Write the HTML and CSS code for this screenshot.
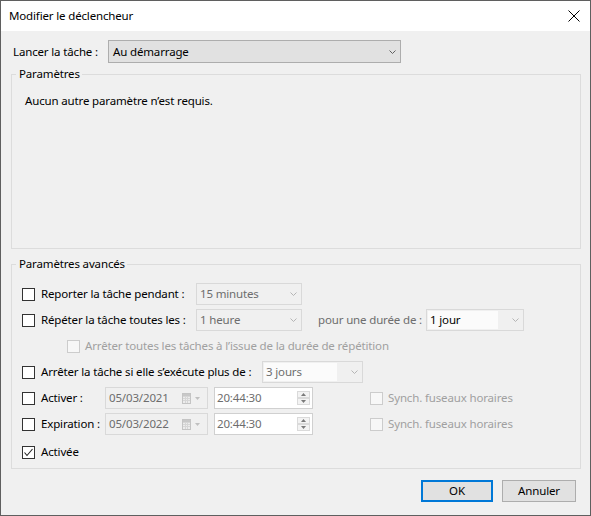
FILE: index.html
```html
<!DOCTYPE html>
<html lang="fr">
<head>
<meta charset="utf-8">
<title>Modifier le déclencheur</title>
<link rel="stylesheet" href="styles.css">
</head>
<body>
<div class="window">
  <div class="titlebar">
    <span class="title">Modifier le déclencheur</span>
    <svg class="close" width="12" height="12" viewBox="0 0 12 12"><path d="M0.5 0.5 L11.5 11.5 M11.5 0.5 L0.5 11.5" stroke="#000" stroke-width="1" fill="none"/></svg>
  </div>
  <div class="body">
    <div class="toprow">
      <span class="toplabel">Lancer la tâche :</span>
      <div class="select">
        <span>Au démarrage</span>
        <svg class="chev" width="7" height="4" viewBox="0 0 7 4"><path d="M0.5 0.5 L3.5 3.5 L6.5 0.5" stroke="#606060" fill="none"/></svg>
      </div>
    </div>

    <div class="group g1">
      <div class="legend">Paramètres</div>
      <p class="note">Aucun autre paramètre n’est requis.</p>
    </div>

    <div class="group g2">
      <div class="legend">Paramètres avancés</div>
      <div class="rows">
        <div class="row">
          <span class="chk"></span>
          <span class="lbl lbl-a">Reporter la tâche pendant :</span>
          <div class="combo w106"><span class="val dim">15 minutes</span><svg class="chev" width="7" height="4" viewBox="0 0 7 4"><path d="M0.5 0.5 L3.5 3.5 L6.5 0.5" stroke="#b5b5b5" fill="none"/></svg></div>
        </div>
        <div class="row">
          <span class="chk"></span>
          <span class="lbl lbl-a">Répéter la tâche toutes les :</span>
          <div class="combo w106"><span class="val dim">1 heure</span><svg class="chev" width="7" height="4" viewBox="0 0 7 4"><path d="M0.5 0.5 L3.5 3.5 L6.5 0.5" stroke="#b5b5b5" fill="none"/></svg></div>
          <span class="lbl lbl-pour dim">pour une durée de :</span>
          <div class="combo w98"><span class="val white">1 jour</span><svg class="chev" width="7" height="4" viewBox="0 0 7 4"><path d="M0.5 0.5 L3.5 3.5 L6.5 0.5" stroke="#b5b5b5" fill="none"/></svg></div>
        </div>
        <div class="row">
          <span class="chk dis indent"></span>
          <span class="lbl faint">Arrêter toutes les tâches à l’issue de la durée de répétition</span>
        </div>
        <div class="row">
          <span class="chk"></span>
          <span class="lbl lbl-b">Arrêter la tâche si elle s’exécute plus de :</span>
          <div class="combo w101"><span class="val white dim">3 jours</span><svg class="chev" width="7" height="4" viewBox="0 0 7 4"><path d="M0.5 0.5 L3.5 3.5 L6.5 0.5" stroke="#b5b5b5" fill="none"/></svg></div>
        </div>
        <div class="row">
          <span class="chk"></span>
          <span class="lbl lbl-c">Activer :</span>
          <div class="date"><span class="dim">05/03/2021</span>
            <span class="cal">
              <svg width="19" height="11" viewBox="0 0 19 11"><rect x="0.5" y="0.5" width="8" height="10" fill="#ececec" stroke="#c4c4c4"/><path d="M1 3.5 H8 M1 5.5 H8 M1 7.5 H8 M3.5 3 V10 M5.5 3 V10" stroke="#d6d6d6"/><rect x="1" y="1" width="7" height="2" fill="#c8c8c8"/><path d="M13 4 L18 4 L15.5 7 Z" fill="#c0c0c0"/></svg>
            </span>
          </div>
          <div class="time"><span class="dim">20:44:30</span>
            <span class="spin"><span class="sb"><svg width="5" height="3" viewBox="0 0 5 3"><path d="M0 3 L2.5 0 L5 3 Z" fill="#7a7a7a"/></svg></span><span class="sb"><svg width="5" height="3" viewBox="0 0 5 3"><path d="M0 0 L2.5 3 L5 0 Z" fill="#7a7a7a"/></svg></span></span>
          </div>
          <span class="chk dis sync"></span>
          <span class="lbl faint">Synch. fuseaux horaires</span>
        </div>
        <div class="row">
          <span class="chk"></span>
          <span class="lbl lbl-c">Expiration :</span>
          <div class="date"><span class="dim">05/03/2022</span>
            <span class="cal">
              <svg width="19" height="11" viewBox="0 0 19 11"><rect x="0.5" y="0.5" width="8" height="10" fill="#ececec" stroke="#c4c4c4"/><path d="M1 3.5 H8 M1 5.5 H8 M1 7.5 H8 M3.5 3 V10 M5.5 3 V10" stroke="#d6d6d6"/><rect x="1" y="1" width="7" height="2" fill="#c8c8c8"/><path d="M13 4 L18 4 L15.5 7 Z" fill="#c0c0c0"/></svg>
            </span>
          </div>
          <div class="time"><span class="dim">20:44:30</span>
            <span class="spin"><span class="sb"><svg width="5" height="3" viewBox="0 0 5 3"><path d="M0 3 L2.5 0 L5 3 Z" fill="#7a7a7a"/></svg></span><span class="sb"><svg width="5" height="3" viewBox="0 0 5 3"><path d="M0 0 L2.5 3 L5 0 Z" fill="#7a7a7a"/></svg></span></span>
          </div>
          <span class="chk dis sync"></span>
          <span class="lbl faint">Synch. fuseaux horaires</span>
        </div>
        <div class="row last">
          <span class="chk checked"><svg width="11" height="11" viewBox="0 0 11 11"><path d="M1.5 5.5 L4 8.5 L9.5 2" stroke="#222" stroke-width="1.1" fill="none"/></svg></span>
          <span class="lbl">Activée</span>
        </div>
      </div>
    </div>

    <div class="buttons">
      <button class="btn ok">OK</button>
      <button class="btn">Annuler</button>
    </div>
  </div>
</div>
</body>
</html>
```
FILE: styles.css
```css
html, body {
  margin: 0;
  padding: 0;
}
body {
  font-family: "Segoe UI", "Noto Sans", sans-serif;
  font-size: 11.5px;
  letter-spacing: -0.15px;
  line-height: 16px;
  color: #000;
  background: #f0f0f0;
}
.window {
  width: 591px;
  height: 516px;
  box-sizing: border-box;
  border: 1px solid #5f5f5f;
  background: #f0f0f0;
  display: flex;
  flex-direction: column;
}
.titlebar {
  height: 30px;
  flex: none;
  background: #fff;
  display: flex;
  align-items: center;
  justify-content: space-between;
  padding: 0 10px 0 8px;
}
.close {
  display: block;
}
.body {
  flex: 1;
  padding: 9px 9px 0 10px;
}
.toprow {
  display: flex;
  align-items: center;
  height: 23px;
  padding-left: 2px;
}
.toplabel {
  width: 95px;
  flex: none;
}
.select {
  width: 293px;
  height: 23px;
  box-sizing: border-box;
  border: 1px solid #adadad;
  background: #e1e1e1;
  display: flex;
  align-items: center;
  justify-content: space-between;
  padding: 0 4px;
}
.chev {
  display: block;
  flex: none;
}
.group {
  border: 1px solid #dcdcdc;
  box-sizing: border-box;
}
.legend {
  width: max-content;
  height: 16px;
  margin: -9px 0 -7px 4px;
  padding: 0 2px 0 3px;
  background: #f0f0f0;
}
.g1 {
  margin-top: 11px;
  height: 175px;
}
.note {
  margin: 18px 0 0 13px;
}
.g2 {
  margin-top: 15px;
  height: 205px;
}
.rows {
  padding: 16px 0 0 10px;
}
.row {
  display: flex;
  align-items: center;
  height: 26px;
}
.row.last {
  margin-top: 2px;
}
.chk {
  width: 13px;
  height: 13px;
  box-sizing: border-box;
  border: 1px solid #333;
  background: #fff;
  flex: none;
  margin-right: 6px;
  display: flex;
  align-items: center;
  justify-content: center;
}
.chk.dis {
  border-color: #cccccc;
  background: #f7f7f7;
  margin-right: 5px;
}
.chk.indent {
  margin-left: 45px;
}
.chk.sync {
  margin-left: 57px;
}
.lbl {
  flex: none;
  white-space: nowrap;
}
.lbl-a { width: 155px; }
.lbl-b { width: 221px; }
.lbl-c { width: 64px; }
.lbl-pour {
  width: 108px;
  margin-left: 16px;
}
.dim { color: #6d6d6d; }
.faint { color: #a0a0a0; }
.combo {
  height: 22px;
  box-sizing: border-box;
  border: 1px solid #d9d9d9;
  display: flex;
  align-items: center;
  justify-content: space-between;
  padding: 0 4px 0 1px;
  flex: none;
}
.w106 { width: 106px; }
.w98 { width: 98px; }
.w101 { width: 101px; }
.val {
  align-self: stretch;
  display: flex;
  align-items: center;
  margin: 1px 14px 1px 0;
  padding-left: 2px;
  flex: 1;
}
.val.white {
  background: #fbfbfb;
}
.date {
  width: 103px;
  height: 22px;
  box-sizing: border-box;
  border: 1px solid #d9d9d9;
  display: flex;
  align-items: center;
  justify-content: space-between;
  padding: 0 6px 0 3px;
  flex: none;
}
.cal svg {
  display: block;
}
.time {
  width: 99px;
  height: 22px;
  margin-left: 6px;
  box-sizing: border-box;
  border: 1px solid #d0d0d0;
  background: #fff;
  display: flex;
  align-items: center;
  justify-content: space-between;
  padding: 0 2px;
  flex: none;
}
.spin {
  display: flex;
  flex-direction: column;
}
.sb {
  width: 13px;
  height: 7px;
  box-sizing: border-box;
  border: 1px solid #dadada;
  background: #f3f3f3;
  display: flex;
  align-items: center;
  justify-content: center;
}
.sb svg {
  display: block;
}
.buttons {
  display: flex;
  justify-content: flex-end;
  gap: 9px;
  margin-top: 11px;
  padding-right: 5px;
}
.btn {
  height: 22px;
  box-sizing: border-box;
  border: 1px solid #adadad;
  background: #e1e1e1;
  font: inherit;
  letter-spacing: -0.15px;
  color: #000;
  padding: 0;
  width: 74px;
}
.btn.ok {
  width: 72px;
  border: 2px solid #0078d7;
}
```
